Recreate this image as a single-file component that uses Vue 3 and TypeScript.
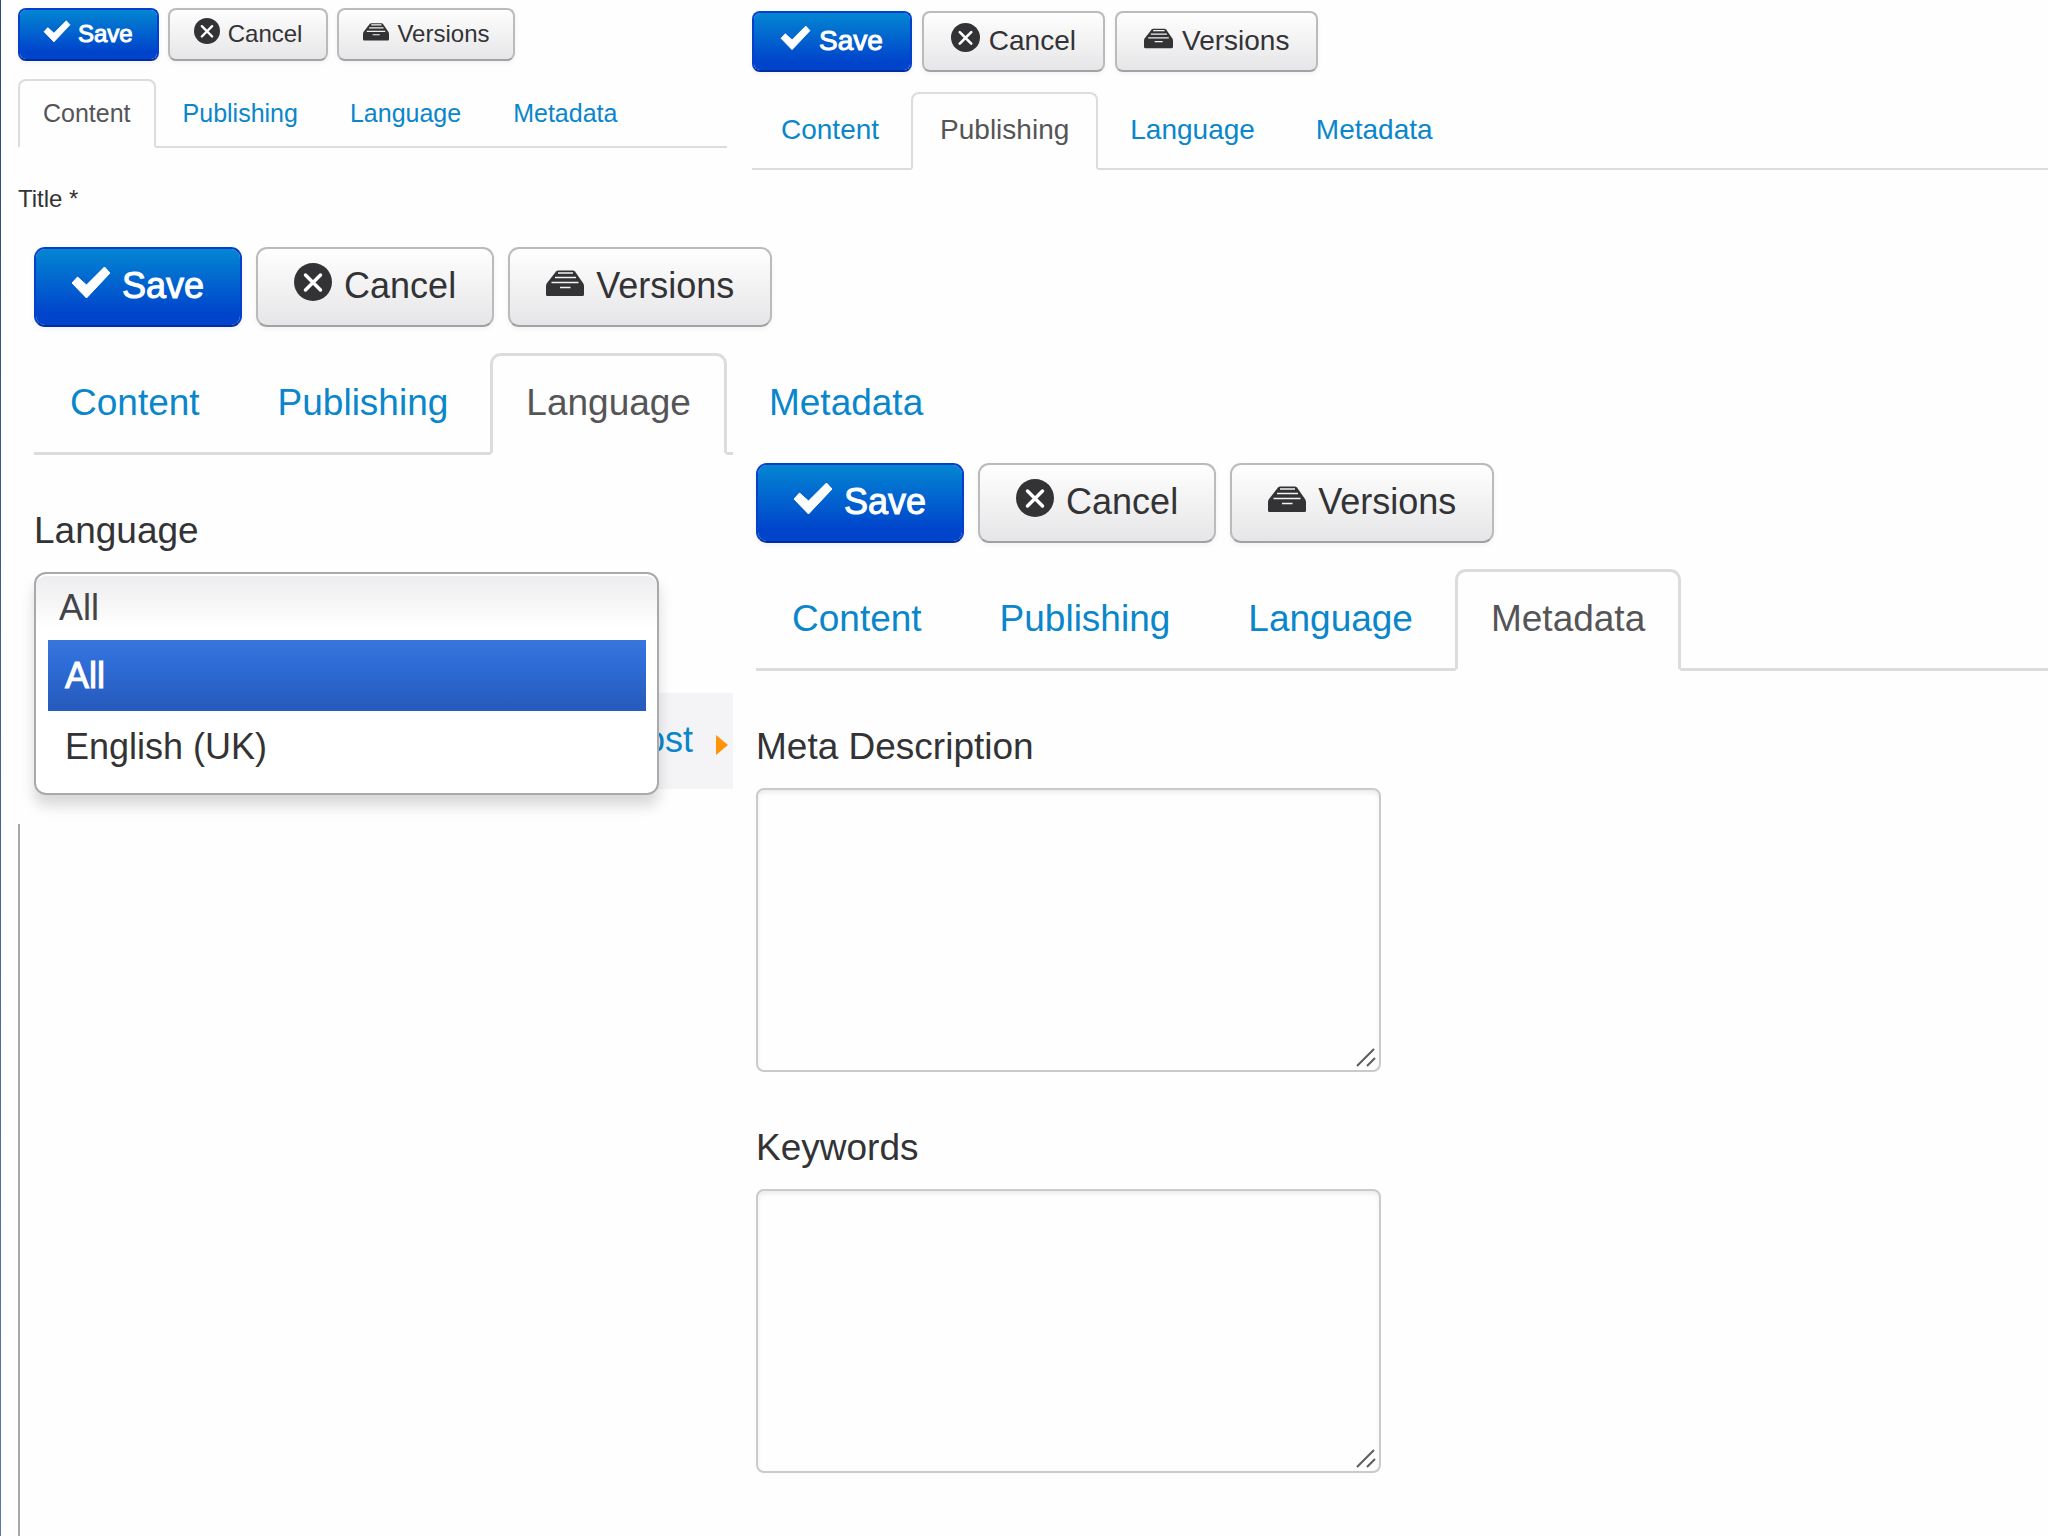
<script setup lang="ts">
import { ref } from 'vue'

type Size = 'sm' | 'md' | 'lg'
interface Panel {
  id: string
  size: Size
  active: string
}

const tabs = ['Content', 'Publishing', 'Language', 'Metadata']
const actions = ['Save', 'Cancel', 'Versions']
const left: Panel[] = [
  { id: 'content', size: 'sm', active: 'Content' },
  { id: 'language', size: 'lg', active: 'Language' },
]
const right: Panel[] = [
  { id: 'publishing', size: 'md', active: 'Publishing' },
  { id: 'metadata', size: 'lg', active: 'Metadata' },
]
const columns = [left, right]

const languages = ['All', 'English (UK)']
const language = ref('All')

const fields = [
  { id: 'meta-description', label: 'Meta Description' },
  { id: 'keywords', label: 'Keywords' },
]
</script>

<template>
  <main class="page">
    <div v-for="(column, c) in columns" :key="c" class="column">
      <section
        v-for="panel in column"
        :key="panel.id"
        :class="['panel', panel.size, panel.id]"
      >
        <div class="actions">
          <button
            v-for="action in actions"
            :key="action"
            type="button"
            :class="['btn', { primary: action === 'Save' }]"
          >
            <svg class="icon" viewBox="0 0 38 38" aria-hidden="true">
              <path
                v-if="action === 'Save'"
                fill="currentColor"
                stroke="currentColor"
                stroke-width="1"
                d="M0 20 5.500 14l9 8L32.500 4 38 10 14.500 35z"
              />
              <template v-else-if="action === 'Cancel'">
                <circle cx="19" cy="19" r="19" fill="currentColor" />
                <path
                  d="M11.500 12 26.500 27M26.500 12 11.500 27"
                  stroke="#fff"
                  stroke-width="3.500"
                  stroke-linecap="round"
                />
              </template>
              <template v-else>
                <path
                  fill="currentColor"
                  d="M12 7.500h15q1 0 2 1L37 20q1 1.500 1 3v8.500q0 1.500-1.500 1.500h-35Q0 33 0 31.500V23q0-1.500 1-3L10 8.500q1-1 2-1z"
                />
                <path
                  d="M12 10h15M9 14.500h21M5.500 19.500h27M14 24.500h10.500"
                  stroke="#f3f3f4"
                  stroke-width="1.600"
                />
              </template>
            </svg>
            <span>{{ action }}</span>
          </button>
        </div>

        <nav class="tabs">
          <a
            v-for="tab in tabs"
            :key="tab"
            href="#"
            :class="['tab', { active: tab === panel.active }]"
            >{{ tab }}</a
          >
        </nav>

        <p v-if="panel.id === 'content'" class="label">Title *</p>

        <template v-if="panel.id === 'language'">
          <label class="label" for="language-select">Language</label>
          <div class="language-area">
            <div class="strip">
              <a href="#">Post</a>
              <svg class="arrow" viewBox="0 0 12 20" aria-hidden="true">
                <path d="M0 0 12 10 0 20z" fill="#ff9408" />
              </svg>
            </div>
            <div class="picker">
              <select id="language-select" v-model="language">
                <option v-for="name in languages" :key="name">{{ name }}</option>
              </select>
              <ul role="listbox" aria-label="Language">
                <li
                  v-for="name in languages"
                  :key="name"
                  role="option"
                  :aria-selected="name === language"
                  :class="{ selected: name === language }"
                  @click="language = name"
                >
                  {{ name }}
                </li>
              </ul>
            </div>
          </div>
        </template>

        <template v-if="panel.id === 'metadata'">
          <div v-for="field in fields" :key="field.id" class="field">
            <label class="label" :for="field.id">{{ field.label }}</label>
            <div class="area">
              <textarea :id="field.id"></textarea>
              <svg class="grip" viewBox="0 0 20 20" aria-hidden="true">
                <path d="M1 19 18 2M11 19l8-8" stroke="#5c5c60" stroke-width="2" />
              </svg>
            </div>
          </div>
        </template>
      </section>

      <div v-if="c === 0" class="frame-edge"></div>
    </div>
  </main>
</template>

<style>
body {
  margin: 0;
  background: #fefefe;
}
</style>

<style scoped>
.page {
  box-sizing: border-box;
  display: grid;
  grid-template-columns: minmax(0, 733fr) minmax(0, 1296fr);
  column-gap: 19px;
  min-height: 100vh;
  background: linear-gradient(#2c4a78, #5f79ab) left / 1px 100% no-repeat;
  color: #333336;
  font-family: 'Liberation Sans', Arial, Helvetica, sans-serif;
}

.column {
  display: flex;
  flex-direction: column;
}

.panel {
  display: flex;
  flex-direction: column;
}

.sm {
  --text: 24px;
  --tab-text: 25px;
  --btn-height: 53px;
  --btn-pad: 24px;
  --btn-gap: 9px;
  --radius: 8px;
  --icon: 26px;
  --icon-gap: 8px;
  --icon-lift: 6px;
  --lower: 1px;
  --row-gap: 18px;
  --line: 2px;
  --tab-height: 69px;
  --tab-pad: 23px;
  --tab-gap: 2px;
}

.md {
  --text: 28px;
  --tab-text: 28px;
  --btn-height: 61px;
  --btn-pad: 27px;
  --btn-gap: 10px;
  --radius: 8px;
  --icon: 29px;
  --icon-gap: 9px;
  --icon-lift: 6px;
  --lower: 2px;
  --row-gap: 20px;
  --line: 2px;
  --tab-height: 78px;
  --tab-pad: 27px;
  --tab-gap: 3px;
}

.lg {
  --text: 36px;
  --tab-text: 37px;
  --btn-height: 80px;
  --btn-pad: 36px;
  --btn-gap: 14px;
  --radius: 11px;
  --icon: 38px;
  --icon-gap: 12px;
  --icon-lift: 8px;
  --lower: 3px;
  --row-gap: 26px;
  --line: 3px;
  --tab-height: 102px;
  --tab-pad: 33px;
  --tab-gap: 6px;
}

.content {
  padding: 8px 6px 0 18px;
}

.language {
  margin-top: 34px;
  padding-left: 34px;
}

.publishing {
  padding-top: 11px;
}

.metadata {
  margin-top: 293px;
  padding-left: 4px;
}

.actions {
  display: flex;
  gap: var(--btn-gap);
  margin-bottom: var(--row-gap);
}

.btn {
  box-sizing: border-box;
  flex: none;
  display: flex;
  align-items: center;
  gap: var(--icon-gap);
  height: var(--btn-height);
  margin: 0;
  padding: 0 var(--btn-pad) var(--lower);
  border: 2px solid #bbbbbe;
  border-bottom-color: #a2a2a5;
  border-radius: var(--radius);
  background: linear-gradient(#ffffff, #e5e5e7) border-box;
  box-shadow: 0 2px 5px rgba(0, 0, 0, 0.05);
  color: #333336;
  font-family: inherit;
  font-size: var(--text);
  line-height: 1;
  white-space: nowrap;
}

.btn.primary {
  border-color: #0440cc;
  border-bottom-color: #002d9f;
  background: linear-gradient(#0386d2, #0044cc 85%) padding-box;
  color: #fff;
  -webkit-text-stroke: 1px #fff;
}

.icon {
  flex: none;
  width: var(--icon);
  height: var(--icon);
  margin-bottom: var(--icon-lift);
  overflow: visible;
  fill: none;
}

.tabs {
  display: flex;
  gap: var(--tab-gap);
  height: var(--tab-height);
  box-shadow: inset 0 calc(0px - var(--line)) #dcdcdf;
}

.tab {
  box-sizing: border-box;
  flex: none;
  display: flex;
  align-items: center;
  padding: 0 var(--tab-pad) var(--lower);
  border: var(--line) solid transparent;
  color: #0a86cb;
  font-size: var(--tab-text);
  text-decoration: none;
}

.tab.active {
  border-color: #dcdcdf;
  border-bottom-color: #fefefe;
  border-radius: var(--radius) var(--radius) 0 0;
  background: #fefefe;
  color: #555558;
}

.label {
  margin: 56px 0 21px;
  font-size: var(--tab-text);
  line-height: 40px;
}

.content .label {
  margin: 37px 0 0;
  font-size: var(--text);
  line-height: 28px;
}

.language-area {
  display: grid;
}

.picker,
.strip {
  grid-area: 1 / 1;
}

.picker {
  z-index: 1;
  box-sizing: border-box;
  width: 100%;
  max-width: 625px;
  border: 2px solid #a9a9ac;
  border-radius: 12px;
  background: linear-gradient(#ececee, #ffffff 54px);
  box-shadow: 0 11px 14px rgba(0, 0, 0, 0.15), inset 0 2px #fff;
  font-size: 36px;
}

.picker select {
  display: block;
  width: 100%;
  height: 66px;
  padding: 0 23px;
  border: 0;
  outline: 0;
  appearance: none;
  background: transparent;
  color: #444447;
  font: inherit;
}

.picker ul {
  margin: 0;
  padding: 0 11px 11px 12px;
  list-style: none;
}

.picker li {
  padding-left: 17px;
  line-height: 71px;
}

.picker .selected {
  background: linear-gradient(#3875dc, #2f6dd8 30%, #275cbf 90%);
  color: #fff;
  -webkit-text-stroke: 1px #fff;
}

.strip {
  box-sizing: border-box;
  align-self: end;
  justify-self: end;
  display: flex;
  align-items: center;
  gap: 23px;
  height: 96px;
  margin-bottom: 6px;
  padding: 0 5px 3px 20px;
  background: #f4f4f6;
  font-size: 36px;
}

.strip a {
  color: #0a86cb;
  text-decoration: none;
}

.arrow {
  width: 12px;
  height: 20px;
  margin-top: 10px;
}

.field {
  display: flex;
  flex-direction: column;
}

.area {
  position: relative;
  max-width: 625px;
}

textarea {
  box-sizing: border-box;
  display: block;
  width: 100%;
  height: 284px;
  padding: 12px;
  border: 2px solid #cacacd;
  border-radius: 8px;
  outline: 0;
  resize: none;
  background: #fefefe;
  box-shadow: inset 0 3px 4px rgba(0, 0, 0, 0.07);
  color: inherit;
  font: inherit;
}

.grip {
  position: absolute;
  right: 5px;
  bottom: 5px;
  width: 20px;
  height: 20px;
}

.frame-edge {
  flex: 1;
  margin: 29px 0 0 18px;
  border-left: 2px solid #a6a6a9;
}
</style>
